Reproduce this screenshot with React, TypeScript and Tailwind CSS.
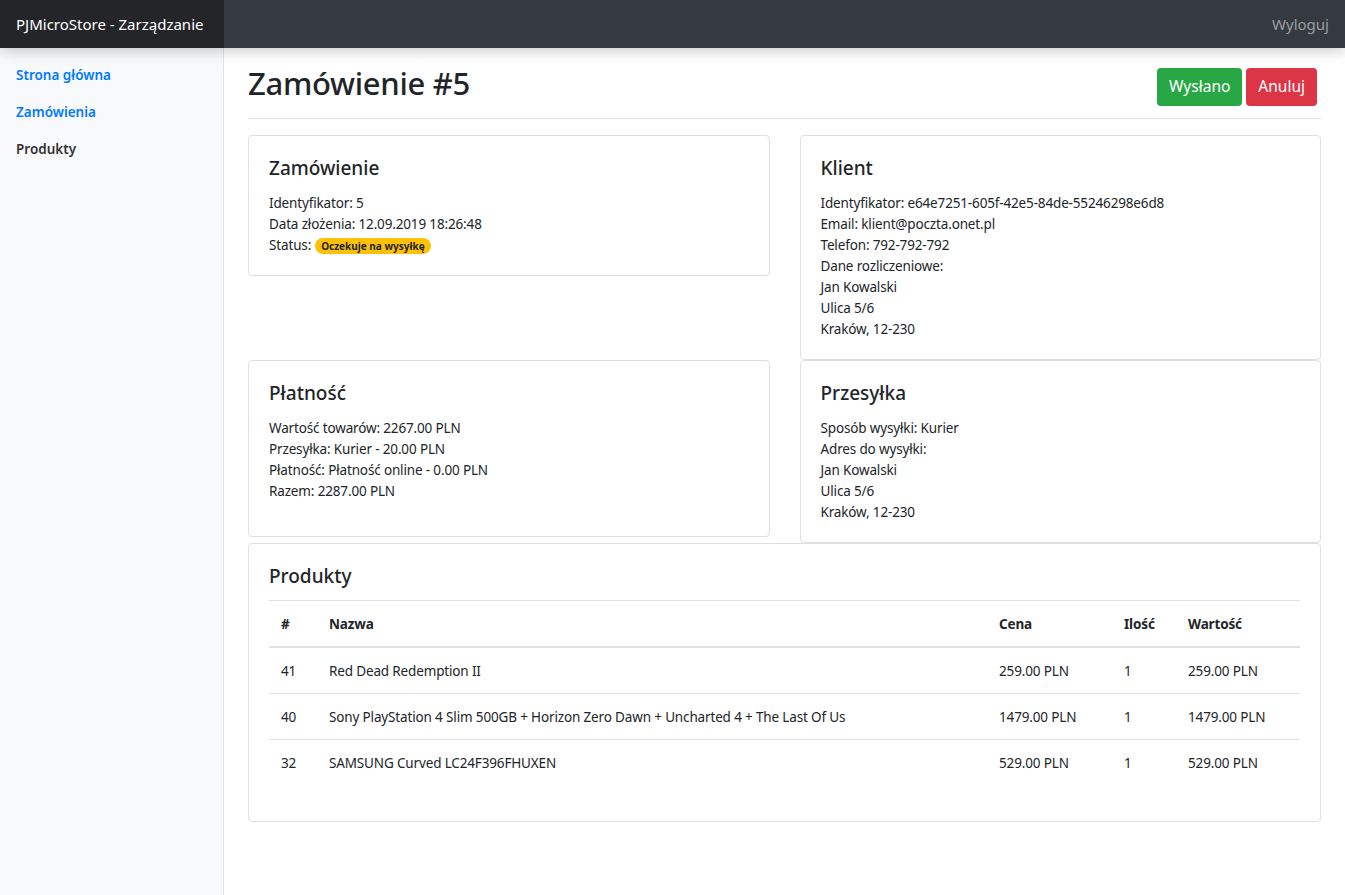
import React from "react";

const FONT = "font-['Noto_Sans','Open_Sans',Roboto,'Liberation_Sans',sans-serif]";

type Product = { id: number; name: string; price: string; qty: number; total: string };

const products: Product[] = [
  { id: 41, name: "Red Dead Redemption II", price: "259.00 PLN", qty: 1, total: "259.00 PLN" },
  {
    id: 40,
    name: "Sony PlayStation 4 Slim 500GB + Horizon Zero Dawn + Uncharted 4 + The Last Of Us",
    price: "1479.00 PLN",
    qty: 1,
    total: "1479.00 PLN",
  },
  { id: 32, name: "SAMSUNG Curved LC24F396FHUXEN", price: "529.00 PLN", qty: 1, total: "529.00 PLN" },
];

function Card({ title, className = "", children }: { title: string; className?: string; children: React.ReactNode }) {
  return (
    <div className={`border border-[#dfdfdf] rounded-[4px] bg-white p-5 ${className}`}>
      <h5 className="text-[19px] leading-[24px] font-medium text-[#212529] mb-3">{title}</h5>
      <div className="text-[13.5px] tracking-[-0.15px] leading-[21px] text-[#212529] pt-px -mb-px">{children}</div>
    </div>
  );
}

export default function App() {
  return (
    <div className={`${FONT} min-h-[895px] bg-white text-[#212529]`}>
      {/* navbar */}
      <div className="h-12 flex items-center bg-[#343a40] shadow-[0_4px_12px_rgba(0,0,0,0.18)] relative z-10">
        <div className="w-[224px] h-full flex items-center px-4 bg-[#232529] text-white text-[15px] whitespace-nowrap">
          PJMicroStore - Zarządzanie
        </div>
        <div className="flex-1" />
        <a className="px-4 text-[15px] text-[#9a9da0]">Wyloguj</a>
      </div>

      <div className="flex">
        {/* sidebar */}
        <div className="w-[224px] min-h-[847px] bg-[#f8f9fa] border-r border-[#e1e2e3] pt-[9px]">
          <div className="flex flex-col text-[13.5px] leading-[21px] font-semibold">
            <a className="px-4 py-2 text-[#007bff]">Strona główna</a>
            <a className="px-4 py-2 text-[#007bff]">Zamówienia</a>
            <a className="px-4 py-2 text-[#333]">Produkty</a>
          </div>
        </div>

        {/* main */}
        <div className="flex-1 px-6 pt-4">
          <div className="flex items-center justify-between pb-2 mb-4 border-b border-[#dee2e6]">
            <h2 className="text-[31px] tracking-[-0.3px] leading-[38px] font-medium mb-2">Zamówienie #5</h2>
            <div className="flex gap-1 mr-1">
              <button className="h-[38px] px-3 rounded-[4px] bg-[#28a745] text-white text-[15.5px]">Wysłano</button>
              <button className="h-[38px] px-3 rounded-[4px] bg-[#dc3545] text-white text-[15.5px]">Anuluj</button>
            </div>
          </div>

          <div className="grid grid-cols-2 gap-x-[30px] items-start">
            <Card title="Zamówienie">
              <div>Identyfikator: 5</div>
              <div>Data złożenia: 12.09.2019 18:26:48</div>
              <div className="flex items-center gap-1">
                Status:
                <span className="inline-block rounded-full bg-[#ffc107] px-[6px] text-[10px] tracking-normal leading-[16px] font-bold text-[#212529]">
                  Oczekuje na wysyłkę
                </span>
              </div>
            </Card>
            <Card title="Klient">
              <div>Identyfikator: e64e7251-605f-42e5-84de-55246298e6d8</div>
              <div>Email: klient@poczta.onet.pl</div>
              <div>Telefon: 792-792-792</div>
              <div>Dane rozliczeniowe:</div>
              <div>Jan Kowalski</div>
              <div>Ulica 5/6</div>
              <div>Kraków, 12-230</div>
            </Card>
            <Card title="Płatność" className="h-[177px]">
              <div>Wartość towarów: 2267.00 PLN</div>
              <div>Przesyłka: Kurier - 20.00 PLN</div>
              <div>Płatność: Płatność online - 0.00 PLN</div>
              <div>Razem: 2287.00 PLN</div>
            </Card>
            <Card title="Przesyłka">
              <div>Sposób wysyłki: Kurier</div>
              <div>Adres do wysyłki:</div>
              <div>Jan Kowalski</div>
              <div>Ulica 5/6</div>
              <div>Kraków, 12-230</div>
            </Card>
          </div>

          <div className="border border-[#dfdfdf] rounded-[4px] bg-white p-5">
            <h5 className="text-[19px] leading-[24px] font-medium mb-3">Produkty</h5>
            <table className="w-full table-fixed text-[13.5px] tracking-[-0.15px] leading-[21px] mb-4 border-collapse">
              <colgroup>
                <col className="w-[48px]" />
                <col />
                <col className="w-[125px]" />
                <col className="w-[64px]" />
                <col className="w-[124px]" />
              </colgroup>
              <thead>
                <tr className="border-t border-[#dee2e6] border-b-2">
                  <th className="pt-[13px] pb-[11px] px-3 text-left font-bold">#</th>
                  <th className="pt-[13px] pb-[11px] px-3 text-left font-bold">Nazwa</th>
                  <th className="pt-[13px] pb-[11px] px-3 text-left font-bold">Cena</th>
                  <th className="pt-[13px] pb-[11px] px-3 text-left font-bold">Ilość</th>
                  <th className="pt-[13px] pb-[11px] px-3 text-left font-bold">Wartość</th>
                </tr>
              </thead>
              <tbody>
                {products.map((p) => (
                  <tr key={p.id} className="border-t border-[#dee2e6]">
                    <td className="pt-[13px] pb-[11px] px-3">{p.id}</td>
                    <td className="pt-[13px] pb-[11px] px-3">{p.name}</td>
                    <td className="pt-[13px] pb-[11px] px-3">{p.price}</td>
                    <td className="pt-[13px] pb-[11px] px-3">{p.qty}</td>
                    <td className="pt-[13px] pb-[11px] px-3">{p.total}</td>
                  </tr>
                ))}
              </tbody>
            </table>
          </div>
        </div>
      </div>
    </div>
  );
}
